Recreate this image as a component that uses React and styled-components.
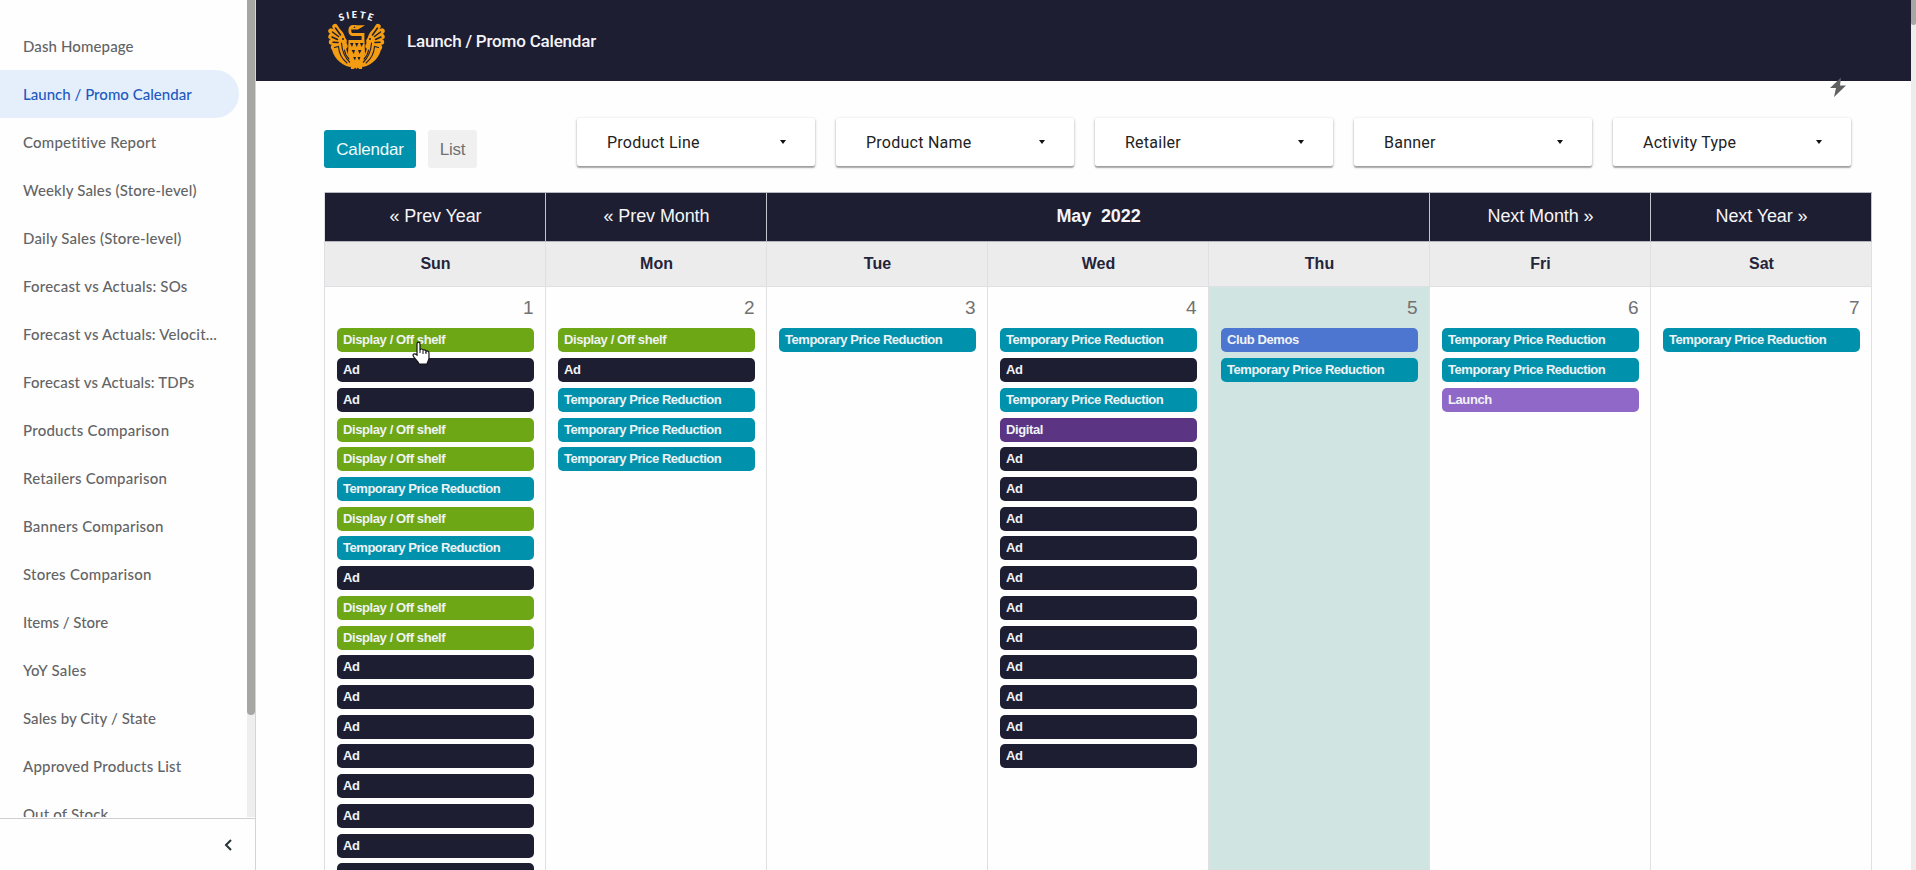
import React from 'react';
import styled, { createGlobalStyle } from 'styled-components';

const Global = createGlobalStyle`
  * { box-sizing: border-box; }
  html, body { margin: 0; padding: 0; overflow: hidden; background: #fefefe; }
`;
const NAVY = '#1e1e33';
const TEAL = '#0092ac';
const GREEN = '#6ea715';
const GOLD = '#f49d13';

const Page = styled.div`
  display: flex;
  width: 1916px;
  height: 870px;
  overflow: hidden;
  font-family: "Liberation Sans", Arial, sans-serif;
`;
const Sidebar = styled.aside`
  width: 256px;
  flex: none;
  display: flex;
  flex-direction: column;
  border-right: 1px solid #d4d4d8;
`;
const NavArea = styled.div`
  height: 818px;
  display: flex;
  overflow: hidden;
`;
const NavList = styled.nav`
  width: 247px;
  padding-top: 22px;
  height: 817px;
  overflow: hidden;
`;
const NavItem = styled.div`
  height: 48px;
  width: 239px;
  padding-left: 23px;
  border-radius: 0 24px 24px 0;
  line-height: 48px;
  font-family: Lato, sans-serif;
  font-weight: 500;
  font-size: 15px;
  white-space: nowrap;
  letter-spacing: ${p => p.$spacing}px;
  color: ${p => (p.$active ? '#2159c0' : '#636466')};
  background: ${p => (p.$active ? '#e5effc' : 'transparent')};
`;
const Track = styled.div`
  width: 8px;
  height: 817px;
  background: #eeeeee;
`;
const Thumb = styled.div`
  height: ${p => p.$height}px;
  background: #a6a6a5;
  border-radius: 0 0 4px 4px;
`;
const Collapse = styled.div`
  flex: 1;
  border-top: 1px solid #d0d0d2;
  display: flex;
  justify-content: flex-end;
  padding: 19px 22px 0 0;
`;
const Main = styled.main`
  width: 1655px;
  flex: none;
`;
const Header = styled.header`
  height: 81px;
  background: ${NAVY};
  display: flex;
  align-items: flex-start;
  padding-left: 68px;
`;
const Title = styled.h1`
  margin: 0 0 0 17px;
  font: 500 17px/83px Roboto, sans-serif;
  letter-spacing: -0.2px;
  color: #f4f4f8;
`;
const Toolbar = styled.div`
  height: 111px;
  display: flex;
  align-items: flex-start;
  padding-left: 68px;
`;
const Bolt = styled.svg`
  position: absolute;
  left: 1829px;
  top: 77px;
`;
const ViewButton = styled.button`
  margin: 49px 12px 0 0;
  padding: 0;
  width: ${p => p.$width}px;
  height: 38px;
  border: 0;
  border-radius: 3px;
  font: 17px/39px "Liberation Sans", sans-serif;
  letter-spacing: -0.2px;
  color: ${p => (p.$active ? '#f2fbfd' : '#717171')};
  background: ${p => (p.$active ? TEAL : '#f0f0f0')};
`;
const Filters = styled.div`
  display: flex;
  gap: 21px;
  margin: 37px 0 0 88px;
`;
const Filter = styled.div`
  width: 238px;
  height: 48px;
  display: flex;
  align-items: center;
  justify-content: space-between;
  padding: 0 29px 0 30px;
  background: #fff;
  border-radius: 2px;
  box-shadow: 0 1px 3px rgba(0, 0, 0, 0.3), 0 2px 1px rgba(0, 0, 0, 0.22);
  font: 16px/49px Roboto, sans-serif;
  letter-spacing: 0.25px;
  color: #222;
`;
const Caret = styled.i`
  border: 3.5px solid transparent;
  border-top: 4px solid #111;
  border-bottom: 0;
`;
const Calendar = styled.section`
  margin-left: 68px;
  width: 1548px;
  height: 678px;
  overflow: hidden;
  border-left: 1px solid #dfdfe3;
`;
const MonthRow = styled.div`
  display: grid;
  grid-template-columns: 1fr 1fr 3fr 1fr 1fr;
  border-top: 1px solid #b9b9c2;
`;
const MonthCell = styled.div`
  height: 49px;
  background: ${NAVY};
  border-right: 1px solid #c4c4cc;
  border-bottom: 1px solid #b4b4be;
  color: #f5f5f8;
  font-size: 18px;
  letter-spacing: -0.1px;
  line-height: 47px;
  text-align: center;
  white-space: pre;
  padding-left: 1px;
  font-weight: ${p => (p.$bold ? 700 : 400)};
`;
const WeekRow = styled.div`
  display: grid;
  grid-template-columns: repeat(7, 1fr);
`;
const DayName = styled.div`
  height: 45px;
  background: #ececec;
  border-right: 1px solid #e0e0e2;
  border-bottom: 1px solid #e0e0e2;
  text-align: center;
  font-weight: 700;
  font-size: 16px;
  line-height: 43px;
  padding-left: 1px;
  color: #24243a;
`;
const Day = styled.div`
  height: 600px;
  padding: 0 11.5px 0 12px;
  border-right: 1px solid #e0e0e2;
  background: ${p => (p.$today ? '#d0e4e2' : '#fefefe')};
`;
const DayNumber = styled.div`
  height: 41.4px;
  line-height: 41px;
  text-align: right;
  font-size: 19px;
  color: #727272;
`;
const Event = styled.div`
  height: 24px;
  margin-bottom: 5.72px;
  border-radius: 5px;
  padding-left: 6px;
  background: ${p => p.$color};
  color: #f0f3f6;
  font-size: 13px;
  font-weight: 700;
  line-height: 24px;
  letter-spacing: ${p => p.$spacing}px;
`;
const Pointer = styled.svg`
  position: absolute;
  left: 411px;
  top: 340px;
`;
const PageScroll = styled.div`
  width: 5px;
  background: #ececec;
`;

const nav = [
  ['Dash Homepage', 0.12], ['Launch / Promo Calendar', 0.02], ['Competitive Report', 0.22],
  ['Weekly Sales (Store-level)', 0.16], ['Daily Sales (Store-level)', 0.2],
  ['Forecast vs Actuals: SOs', 0.2], ['Forecast vs Actuals: Velocit...', 0.17],
  ['Forecast vs Actuals: TDPs', 0.12], ['Products Comparison', 0.24],
  ['Retailers Comparison', 0.2], ['Banners Comparison', 0.21], ['Stores Comparison', 0.24],
  ['Items / Store', -0.04], ['YoY Sales', 0.3], ['Sales by City / State', 0.06],
  ['Approved Products List', 0.2], ['Out of Stock', 0.18],
];
const types = {
  D: ['Display / Off shelf', GREEN, -0.4],
  A: ['Ad', NAVY, -0.4],
  T: ['Temporary Price Reduction', TEAL, -0.46],
  C: ['Club Demos', '#4d76d0', -0.4],
  G: ['Digital', '#5b3583', -0.4],
  L: ['Launch', '#9069c8', -0.4],
};
const days = ['DAADDTDTADDAAAAAAAA', 'DATTT', 'T', 'TATGAAAAAAAAAAA', 'CT', 'TTL', 'T'];

function Wing() {
  return (
    <g fill="none" strokeLinecap="round">
      <path d="M20 41L11 26.500M20 41L7 31M20 42L7 36.500M20 43L7.500 42M21 46L9.500 47.500" stroke={GOLD} strokeWidth="5.4" />
      <path d="M14 28C18 30 21.500 35 21.500 41C21.500 50 24 57 31 64L26 67C16 65 8 56 7.500 46Z" fill={GOLD} />
      <path d="M11.500 28L16.500 35M8.500 32L14.500 36.500M8 37L13.500 39.500M9 42.300L14 42.500" stroke={NAVY} strokeWidth="1.5" />
      <path d="M10.500 47.500L14.500 46.500C15 53 18 59 23 63M17.500 43C18 51 20 57 26 62.500M20.500 50C21 54 23 57 25 59" stroke={NAVY} strokeWidth="1.1" />
      <circle cx="19" cy="39" r="1" fill={NAVY} />
    </g>
  );
}
function Logo() {
  return (
    <svg width="66" height="72" viewBox="0 0 66 72">
      <defs><path id="arc" d="M11 24Q32.500 12 54 24" /></defs>
      <text fill="#fff" fontFamily="Lato, sans-serif" fontWeight="900" fontSize="9.5" letterSpacing="2">
        <textPath href="#arc" startOffset="51%" textAnchor="middle">SIETE</textPath>
      </text>
      <Wing />
      <g transform="translate(65 0) scale(-1 1)"><Wing /></g>
      <path d="M24.500 40H40.500L41 54C40 58 38 61 37.500 63.500H27.500C27 61 25 58 24 54Z" fill={GOLD} />
      <path d="M26 62H39L38 69H35L34 67.500L32.500 69L31 67.500L30 69H27Z" fill={GOLD} />
      <path d="M32 26.500H29.500C24.500 26.500 25 34.500 28.500 34.500H39V40" fill="none" stroke={GOLD} strokeWidth="2.8" />
      <path d="M28 25.200L41 25.200L34 29.500H28Z" fill={GOLD} />
      <circle cx="30.500" cy="27.200" r="0.800" fill={NAVY} />
      <g fill={NAVY}>
        <path d="M26 43H29.500L28 47ZM31 43H34.500L32.800 47ZM36 43H39.500L37.500 47Z" />
        <path d="M27.500 50H31L29.800 54ZM34 50H37.500L35.500 54Z" />
        <path d="M29 57H32L31 60.500ZM33.500 57H36.500L35 60.500Z" />
      </g>
    </svg>
  );
}

export default function App() {
  return (
    <Page>
      <Global />
      <Sidebar>
        <NavArea>
          <NavList>
            {nav.map(([label, spacing], i) => (
              <NavItem key={label} $active={i === 1} $spacing={spacing}>{label}</NavItem>
            ))}
          </NavList>
          <Track><Thumb $height={715} /></Track>
        </NavArea>
        <Collapse>
          <svg width="10" height="14" viewBox="0 0 10 14"><path d="M8 2L3 7L8 12" fill="none" stroke="#263238" strokeWidth="2" /></svg>
        </Collapse>
      </Sidebar>
      <Main>
        <Header><Logo /><Title>Launch / Promo Calendar</Title></Header>
        <Toolbar>
          <ViewButton $active $width={92}>Calendar</ViewButton>
          <ViewButton $width={49}>List</ViewButton>
          <Filters>
            {['Product Line', 'Product Name', 'Retailer', 'Banner', 'Activity Type'].map(f => (
              <Filter key={f}>{f}<Caret /></Filter>
            ))}
          </Filters>
        </Toolbar>
        <Calendar>
          <MonthRow>
            <MonthCell>« Prev Year</MonthCell>
            <MonthCell>« Prev Month</MonthCell>
            <MonthCell $bold>{'May  2022'}</MonthCell>
            <MonthCell>Next Month »</MonthCell>
            <MonthCell>Next Year »</MonthCell>
          </MonthRow>
          <WeekRow>
            {['Sun', 'Mon', 'Tue', 'Wed', 'Thu', 'Fri', 'Sat'].map(d => <DayName key={d}>{d}</DayName>)}
          </WeekRow>
          <WeekRow>
            {days.map((codes, i) => (
              <Day key={i} $today={i === 4}>
                <DayNumber>{i + 1}</DayNumber>
                {codes.split('').map((c, j) => (
                  <Event key={j} $color={types[c][1]} $spacing={types[c][2]}>{types[c][0]}</Event>
                ))}
              </Day>
            ))}
          </WeekRow>
        </Calendar>
      </Main>
      <PageScroll><Thumb $height={25} /></PageScroll>
      <Bolt width="18" height="21" viewBox="0 0 18 21"><path d="M12 0.500L1 11H7L5 20L17 8.500H11Z" fill="#5f6062" /></Bolt>
      <Pointer width="20" height="26" viewBox="0 0 20 26">
        <path d="M6 15V4C6 1.6 9 1.6 9 4V10C9.5 8.500 12 8.700 12 10.500C12.500 9.400 15 9.600 15 11.500C15.700 10.500 18 10.900 18 13V18C18 20 16.500 22 16 24H8C7 21 4 19 2.500 16.500C1 14 3.500 12.800 6 15Z" fill="#fff" stroke="#111" strokeWidth="1.2" />
        <path d="M9 10V13M12 11V14M15 12V14" stroke="#111" />
      </Pointer>
    </Page>
  );
}
